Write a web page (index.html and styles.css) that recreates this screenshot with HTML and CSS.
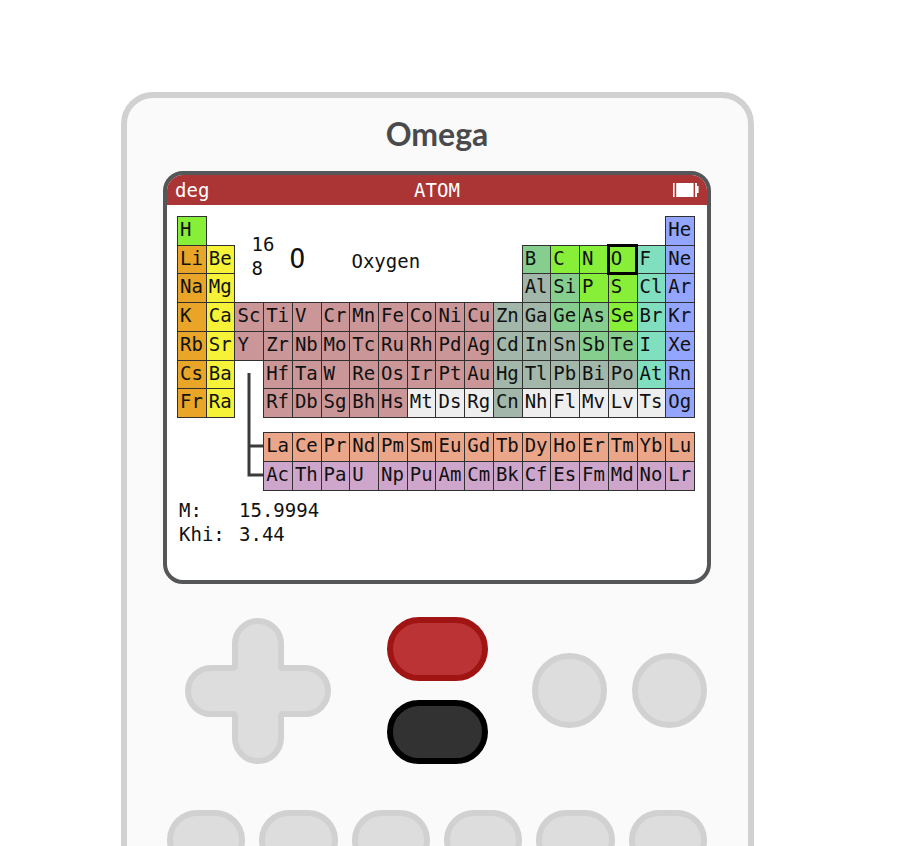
FILE: index.html
```html
<!DOCTYPE html>
<html lang="en">
<head>
<meta charset="utf-8">
<meta name="viewport" content="width=device-width, initial-scale=1">
<title>Omega</title>
<link rel="stylesheet" href="styles.css">
</head>
<body>
<main class="stage">
  <div class="calculator">
    <h1 class="logo">Omega</h1>

    <section class="screen">
      <header class="status">
        <span class="angle">deg</span>
        <span class="title">ATOM</span>
        <svg class="battery" viewBox="0 0 26 14" width="26" height="14" aria-hidden="true">
          <path d="M0 0h1.6v14H0zM3.2 0h17.4v14H3.2zM22 0h2v3h1.6v7H24v4h-2z" fill="#fff"/>
        </svg>
      </header>

      <div class="app">
        <table class="elements">
          <tbody>
            <tr>
              <td class="nonmetal">H</td><td class="blank"></td>
              <td class="blank" colspan="10" rowspan="3">
                <div class="selected-info">
                  <div class="numbers"><span>16</span><span>8</span></div>
                  <span class="symbol">O</span>
                  <span class="name">Oxygen</span>
                </div>
              </td>
              <td class="blank" colspan="5"></td><td class="noble">He</td>
            </tr>
            <tr>
              <td class="alkali">Li</td><td class="earth">Be</td>
              <td class="metalloid">B</td><td class="nonmetal">C</td><td class="nonmetal">N</td><td class="nonmetal current">O</td><td class="halogen">F</td><td class="noble">Ne</td>
            </tr>
            <tr>
              <td class="alkali">Na</td><td class="earth">Mg</td>
              <td class="post">Al</td><td class="metalloid">Si</td><td class="nonmetal">P</td><td class="nonmetal">S</td><td class="halogen">Cl</td><td class="noble">Ar</td>
            </tr>
            <tr>
              <td class="alkali">K</td><td class="earth">Ca</td><td class="transition">Sc</td><td class="transition">Ti</td><td class="transition">V</td><td class="transition">Cr</td><td class="transition">Mn</td><td class="transition">Fe</td><td class="transition">Co</td><td class="transition">Ni</td><td class="transition">Cu</td><td class="post">Zn</td><td class="post">Ga</td><td class="metalloid">Ge</td><td class="metalloid">As</td><td class="nonmetal">Se</td><td class="halogen">Br</td><td class="noble">Kr</td>
            </tr>
            <tr>
              <td class="alkali">Rb</td><td class="earth">Sr</td><td class="transition">Y</td><td class="transition">Zr</td><td class="transition">Nb</td><td class="transition">Mo</td><td class="transition">Tc</td><td class="transition">Ru</td><td class="transition">Rh</td><td class="transition">Pd</td><td class="transition">Ag</td><td class="post">Cd</td><td class="post">In</td><td class="post">Sn</td><td class="metalloid">Sb</td><td class="metalloid">Te</td><td class="halogen">I</td><td class="noble">Xe</td>
            </tr>
            <tr>
              <td class="alkali">Cs</td><td class="earth">Ba</td>
              <td class="blank link" rowspan="5">
                <svg viewBox="0 0 28 118" width="28" height="118" aria-hidden="true">
                  <path d="M14 0v102h14M14 73h14" fill="none" stroke="#3a3a3a" stroke-width="3" stroke-linejoin="miter"/>
                </svg>
              </td>
              <td class="transition">Hf</td><td class="transition">Ta</td><td class="transition">W</td><td class="transition">Re</td><td class="transition">Os</td><td class="transition">Ir</td><td class="transition">Pt</td><td class="transition">Au</td><td class="post">Hg</td><td class="post">Tl</td><td class="post">Pb</td><td class="post">Bi</td><td class="post">Po</td><td class="halogen">At</td><td class="noble">Rn</td>
            </tr>
            <tr>
              <td class="alkali">Fr</td><td class="earth">Ra</td><td class="transition">Rf</td><td class="transition">Db</td><td class="transition">Sg</td><td class="transition">Bh</td><td class="transition">Hs</td><td class="unknown">Mt</td><td class="unknown">Ds</td><td class="unknown">Rg</td><td class="post">Cn</td><td class="unknown">Nh</td><td class="unknown">Fl</td><td class="unknown">Mv</td><td class="unknown">Lv</td><td class="unknown">Ts</td><td class="noble">Og</td>
            </tr>
            <tr class="spacer">
              <td class="blank" colspan="2"></td><td class="blank" colspan="15"></td>
            </tr>
            <tr>
              <td class="blank" colspan="2"></td><td class="lanthanide">La</td><td class="lanthanide">Ce</td><td class="lanthanide">Pr</td><td class="lanthanide">Nd</td><td class="lanthanide">Pm</td><td class="lanthanide">Sm</td><td class="lanthanide">Eu</td><td class="lanthanide">Gd</td><td class="lanthanide">Tb</td><td class="lanthanide">Dy</td><td class="lanthanide">Ho</td><td class="lanthanide">Er</td><td class="lanthanide">Tm</td><td class="lanthanide">Yb</td><td class="lanthanide">Lu</td>
            </tr>
            <tr>
              <td class="blank" colspan="2"></td><td class="actinide">Ac</td><td class="actinide">Th</td><td class="actinide">Pa</td><td class="actinide">U</td><td class="actinide">Np</td><td class="actinide">Pu</td><td class="actinide">Am</td><td class="actinide">Cm</td><td class="actinide">Bk</td><td class="actinide">Cf</td><td class="actinide">Es</td><td class="actinide">Fm</td><td class="actinide">Md</td><td class="actinide">No</td><td class="actinide">Lr</td>
            </tr>
          </tbody>
        </table>

        <dl class="facts">
          <dt>M:</dt><dd>15.9994</dd>
          <dt>Khi:</dt><dd>3.44</dd>
        </dl>
      </div>
    </section>

    <div class="controls">
      <div class="dpad">
        <svg class="dpad-shape" viewBox="0 0 146 146" aria-hidden="true">
          <path d="M50 50V26a23 23 0 0 1 46 0V50H120a23 23 0 0 1 0 46H96V120a23 23 0 0 1 -46 0V96H26a23 23 0 0 1 0 -46Z" fill="#ddd" stroke="#d1d1d1" stroke-width="6" stroke-linejoin="bevel"/>
        </svg>
        <button class="up" type="button" aria-label="Up"></button>
        <button class="left" type="button" aria-label="Left"></button>
        <button class="right" type="button" aria-label="Right"></button>
        <button class="down" type="button" aria-label="Down"></button>
      </div>
      <div class="main-keys">
        <button class="key home" type="button" aria-label="Home"></button>
        <button class="key power" type="button" aria-label="Power"></button>
      </div>
      <div class="round-keys">
        <button class="key round" type="button" aria-label="OK"></button>
        <button class="key round" type="button" aria-label="Back"></button>
      </div>
    </div>

    <div class="keypad">
      <button class="key" type="button" aria-label="Shift"></button>
      <button class="key" type="button" aria-label="Alpha"></button>
      <button class="key" type="button" aria-label="Cut"></button>
      <button class="key" type="button" aria-label="Copy"></button>
      <button class="key" type="button" aria-label="Paste"></button>
      <button class="key" type="button" aria-label="Delete"></button>
    </div>
  </div>
</main>
</body>
</html>
```

FILE: styles.css
```css
* {
  box-sizing: border-box;
}

body {
  margin: 0;
  background: #fff;
}

.stage {
  height: 100vh;
  overflow: hidden;
  padding: 92px 146px 0 121px;
}

.calculator {
  padding: 0 37px 48px 36px;
  border: 6px solid #d1d1d1;
  border-radius: 32px;
  background: #fafafa;
}

.logo {
  margin: 0;
  padding-bottom: 1px;
  font: bold 32px/72px Lato, "Liberation Sans", sans-serif;
  text-align: center;
  color: #4a4a4c;
}

.screen {
  overflow: hidden;
  border: 4px solid #555657;
  border-radius: 20px;
  background: #fff;
  color: #111;
  font: 19px/24px "DejaVu Sans Mono", monospace;
}

.status {
  display: grid;
  grid-template-columns: 1fr auto 1fr;
  align-items: center;
  height: 30px;
  padding: 0 8px;
  background: #aa3534;
  color: #fff;
}

.battery {
  justify-self: end;
}

.app {
  padding: 11px 12px 34px 10px;
}

.elements {
  width: 100%;
  height: 275px;
  table-layout: fixed;
  border-collapse: collapse;
}

.elements tr {
  height: 28px;
}

.elements .spacer {
  height: 15px;
}

.elements td {
  padding: 0 0 0 2px;
  border: 1px solid #303030;
  line-height: 24px;
  vertical-align: top;
}

.elements .blank {
  padding: 0;
  border: 0;
}

.elements .link {
  vertical-align: bottom;
}

.link svg {
  display: block;
}

.alkali { background: #e8a527; }
.earth { background: #f6f237; }
.transition { background: #cb9697; }
.post { background: #a2b7aa; }
.metalloid { background: #86ce8d; }
.nonmetal { background: #88ef38; }
.halogen { background: #80dfbf; }
.noble { background: #93a5fc; }
.unknown { background: #eee; }
.lanthanide { background: #eba68a; }
.actinide { background: #cea6cc; }

.current {
  outline: 3px solid #000;
  outline-offset: -2px;
}

.selected-info {
  display: flex;
  align-items: center;
  padding: 15px 0 0 16px;
}

.numbers {
  display: flex;
  flex-direction: column;
  width: 38px;
}

.symbol {
  width: 62px;
  padding-top: 6px;
  font-size: 26px;
}

.name {
  padding-top: 10px;
}

.facts {
  display: grid;
  grid-template-columns: 60px 1fr;
  margin: 7px 0 0;
  padding-left: 2px;
}

.facts dd {
  margin: 0;
}

.controls {
  display: grid;
  grid-template-columns: 1fr auto 1fr;
  align-items: center;
  padding: 33px 4px 46px;
}

.dpad {
  position: relative;
  display: grid;
  grid-template: 48px 50px 48px / 48px 50px 48px;
  grid-template-areas: ". up ." "left . right" ". down .";
  margin-left: 18px;
  justify-self: start;
}

.dpad-shape {
  position: absolute;
  inset: 0;
}

.dpad button {
  position: relative;
  padding: 0;
  border: 0;
  background: none;
}

.up { grid-area: up; }
.left { grid-area: left; }
.right { grid-area: right; }
.down { grid-area: down; }

.key {
  height: 60px;
  padding: 0;
  border: 6px solid #d1d1d1;
  border-radius: 32px;
  background: #ddd;
}

.main-keys {
  display: grid;
  grid-template-columns: 101px;
  gap: 19px;
}

.home,
.power {
  height: 64px;
}

.home {
  border-color: #a01514;
  background: #bb3335;
}

.power {
  border-color: #000;
  background: #323232;
}

.round-keys {
  display: flex;
  gap: 25px;
  justify-self: end;
}

.round {
  width: 75px;
  height: 75px;
  border-radius: 50%;
}

.keypad {
  display: grid;
  grid-template-columns: repeat(6, 1fr);
  gap: 14px;
  padding: 0 4px;
}
```
